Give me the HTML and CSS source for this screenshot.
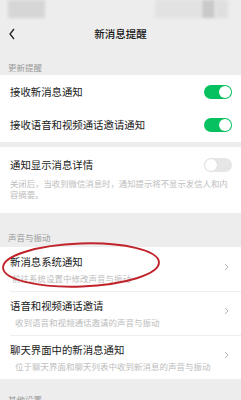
FILE: index.html
```html
<!DOCTYPE html>
<html lang="zh">
<head>
<meta charset="utf-8">
<link rel="stylesheet" href="styles.css">
</head>
<body>
<div class="page">
  <div class="status">
    <div class="sb sb-left"></div>
    <div class="sb-spacer"></div>
    <div class="sb sb-r1"></div>
    <div class="sb sb-r2"></div>
    <div class="sb sb-r3"></div>
  </div>
  <div class="nav">
    <svg class="back" width="8" height="12" viewBox="0 0 8 12"><polyline points="6,1 2,6 6,11" fill="none" stroke="#222" stroke-width="1.3"/></svg>
    <div class="title">新消息提醒</div>
  </div>

  <div class="label l1">更新提醒</div>
  <div class="group">
    <div class="row row-sw">
      <span class="rt">接收新消息通知</span>
      <span class="sw on"><span class="knob"></span></span>
    </div>
    <div class="row row-sw">
      <span class="rt">接收语音和视频通话邀请通知</span>
      <span class="sw on"><span class="knob"></span></span>
    </div>
  </div>

  <div class="group g2">
    <div class="row row-detail">
      <div class="rtop">
        <span class="rt">通知显示消息详情</span>
        <span class="sw off"><span class="knob"></span></span>
      </div>
      <div class="desc">关闭后，当收到微信消息时，通知提示将不显示发信人和内容摘要。</div>
    </div>
  </div>

  <div class="label l2">声音与振动</div>
  <div class="group">
    <div class="row row-link">
      <div class="txt">
        <div class="rt">新消息系统通知</div>
        <div class="sub">前往系统设置中修改声音与振动</div>
      </div>
      <svg class="chev" width="5" height="8" viewBox="0 0 5 8"><polyline points="1,1 4,4 1,7" fill="none" stroke="#b5b5b5" stroke-width="1"/></svg>
    </div>
    <div class="row row-link div">
      <div class="txt">
        <div class="rt">语音和视频通话邀请</div>
        <div class="sub ind">收到语音和视频通话邀请的声音与振动</div>
      </div>
      <svg class="chev" width="5" height="8" viewBox="0 0 5 8"><polyline points="1,1 4,4 1,7" fill="none" stroke="#b5b5b5" stroke-width="1"/></svg>
    </div>
    <div class="row row-link div">
      <div class="txt">
        <div class="rt">聊天界面中的新消息通知</div>
        <div class="sub ind">位于聊天界面和聊天列表中收到新消息的声音与振动</div>
      </div>
      <svg class="chev" width="5" height="8" viewBox="0 0 5 8"><polyline points="1,1 4,4 1,7" fill="none" stroke="#b5b5b5" stroke-width="1"/></svg>
    </div>
  </div>
  <div class="label l3">其他设置</div>

  <svg class="oval" width="170" height="56" viewBox="0 0 170 56"><ellipse cx="83" cy="27" rx="78" ry="21.5" fill="none" stroke="#c0232a" stroke-width="1.9" transform="rotate(-2 83 27)"/></svg>
</div>
</body>
</html>
```

FILE: styles.css
```css
* { box-sizing: border-box; }
html, body { margin: 0; padding: 0; }
body {
  background: #ededed;
  font-family: "Noto Sans CJK SC", "Noto Sans", sans-serif;
  color: #1a1a1a;
  width: 241px;
  height: 400px;
  overflow: hidden;
}
.page { position: relative; width: 241px; height: 400px; }

.status {
  height: 20px;
  display: flex;
  align-items: flex-start;
  padding: 0 13px 0 8px;
}
.sb { height: 18px; filter: blur(1.5px); }
.sb-left { width: 37px; background: #d6d6d6; }
.sb-spacer { flex: 1; }
.sb-r1 { width: 46px; background: #e2e2e2; }
.sb-r2 { width: 13px; background: #c9c9c9; margin-left: 1px; }
.sb-r3 { width: 13px; background: #dfdfdf; }

.nav {
  height: 28px;
  display: flex;
  align-items: center;
  justify-content: center;
  position: relative;
}
.back { position: absolute; left: 8px; top: 8px; }
.title { font-size: 10.5px; font-weight: 500; color: #161616; line-height: 14px; }

.label {
  font-size: 8.5px;
  color: #9a9a9a;
  line-height: 12px;
  padding-left: 8px;
}
.l1 { padding-top: 13px; padding-bottom: 2px; }
.l2 { padding-top: 18px; padding-bottom: 4px; }
.l3 { padding-top: 14px; }

.group { background: #fff; }
.g2 { margin-top: 5px; }

.rt { font-size: 10.4px; line-height: 14px; color: #1a1a1a; }

.row { padding: 0 9px 0 10px; }
.row-sw {
  height: 33.5px;
  display: flex;
  align-items: center;
  justify-content: space-between;
}

.sw {
  width: 28px;
  height: 14px;
  border-radius: 7px;
  position: relative;
  display: block;
}
.sw.on { background: #07c160; }
.sw.off { background: #e6e6e6; }
.knob {
  position: absolute;
  top: 1px;
  width: 12px;
  height: 12px;
  border-radius: 50%;
  background: #fff;
}
.sw.on .knob { right: 1px; }
.sw.off .knob { left: 1px; box-shadow: 0 0 0 0.5px #d8d8d8; }

.row-detail { padding-top: 11px; padding-bottom: 13px; }
.rtop { display: flex; align-items: center; justify-content: space-between; }
.desc {
  margin-top: 5.5px;
  font-size: 8.4px;
  line-height: 11px;
  color: #bdbdbd;
  margin-right: -4px;
}

.row-link {
  height: 44px;
  display: flex;
  align-items: center;
  justify-content: space-between;
  padding-top: 1px;
  position: relative;
}
.row-link.div::before {
  content: "";
  position: absolute;
  left: 10px;
  right: 0;
  top: 0;
  border-top: 0.5px solid #eeeeee;
}
.txt { display: flex; flex-direction: column; }
.sub {
  margin-top: 3px;
  font-size: 8.5px;
  line-height: 12px;
  color: #bdbdbd;
  padding-left: 2px;
}
.sub.ind { padding-left: 5px; }
.chev { margin-right: 3px; margin-top: -4px; }

.oval {
  position: absolute;
  left: -2px;
  top: 238px;
  pointer-events: none;
}
```
